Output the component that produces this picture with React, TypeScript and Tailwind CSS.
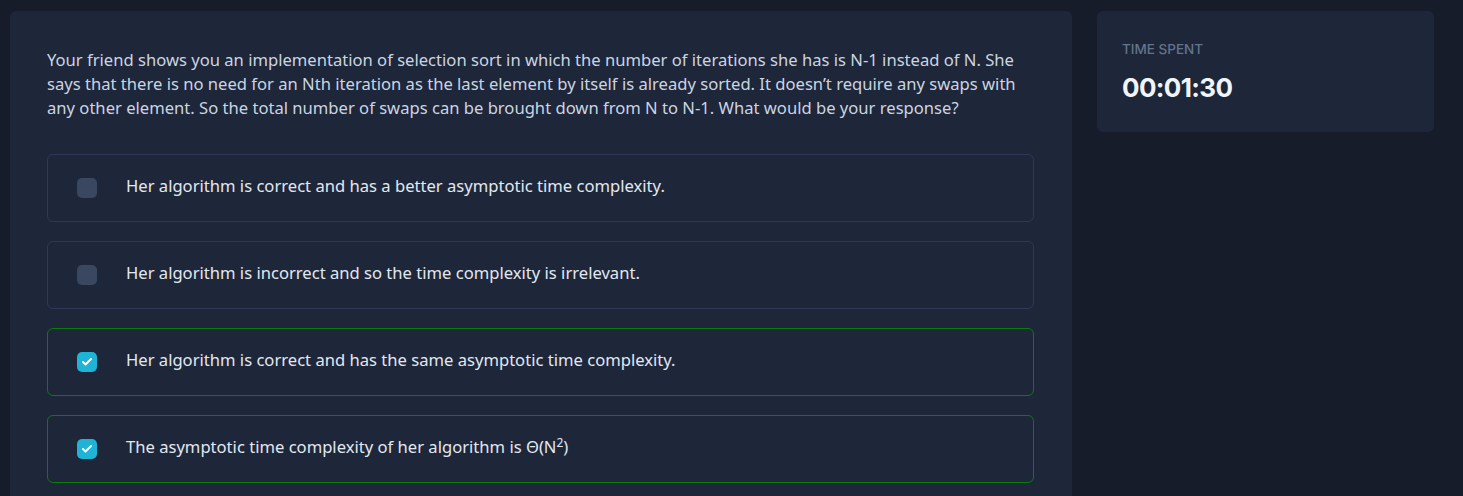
import { Check } from 'lucide-react'

type Option = {
    id: number
    label: React.ReactNode
    checked: boolean
}

const options: Option[] = [
    { id: 1, label: 'Her algorithm is correct and has a better asymptotic time complexity.', checked: false },
    { id: 2, label: 'Her algorithm is incorrect and so the time complexity is irrelevant.', checked: false },
    { id: 3, label: 'Her algorithm is correct and has the same asymptotic time complexity.', checked: true },
    {
        id: 4,
        label: (
            <>
                The asymptotic time complexity of her algorithm is Θ(N<sup className="text-[12px]">2</sup>)
            </>
        ),
        checked: true,
    },
]

function OptionRow({ option }: { option: Option }) {
    return (
        <div
            className={`flex h-[68px] items-center rounded-md border px-[29px] ${
                option.checked ? 'border-[#0a7b0c]' : 'border-[#2d3955]'
            }`}
        >
            <span
                className={`flex h-5 w-5 shrink-0 items-center justify-center rounded-[5px] ${
                    option.checked ? 'bg-[#1fb3d5]' : 'bg-[#3a4761]'
                }`}
            >
                {option.checked && <Check className="h-3 w-3 text-white" strokeWidth={4} />}
            </span>
            <span className="ml-[29px] pb-[4px] text-[16.6px] text-[#e2e8f0]">{option.label}</span>
        </div>
    )
}

export default function App() {
    return (
        <div
            className="flex min-h-[496px] items-start gap-[25px] bg-[#171c2a] pl-[10px] pt-[11px]"
            style={{ fontFamily: '"Noto Sans", Inter, sans-serif' }}
        >
            <main className="h-[500px] w-[1062px] rounded-t-md bg-[#1e263a] px-[37px] pt-[37px]">
                <p className="w-[990px] text-[16.6px] leading-6 text-[#cbd5e1]">
                    Your friend shows you an implementation of selection sort in which the number of iterations she has
                    is N-1 instead of N. She says that there is no need for an Nth iteration as the last element by
                    itself is already sorted. It doesn’t require any swaps with any other element. So the total number
                    of swaps can be brought down from N to N-1. What would be your response?
                </p>

                <div className="mt-[34px] flex w-[987px] flex-col gap-[19px]">
                    {options.map((o) => (
                        <OptionRow key={o.id} option={o} />
                    ))}
                </div>
            </main>

            <aside
                className="h-[121px] w-[337px] rounded-md bg-[#1e263a] px-[25px] pt-[28px]"
                style={{ fontFamily: 'Inter, "Noto Sans", sans-serif' }}
            >
                <div className="text-[13.5px] font-medium uppercase leading-5 text-[#64748b]">Time spent</div>
                <div className="mt-[13px] text-[26px] font-bold leading-8 tracking-tight text-[#f1f5f9]">00:01:30</div>
            </aside>
        </div>
    )
}
